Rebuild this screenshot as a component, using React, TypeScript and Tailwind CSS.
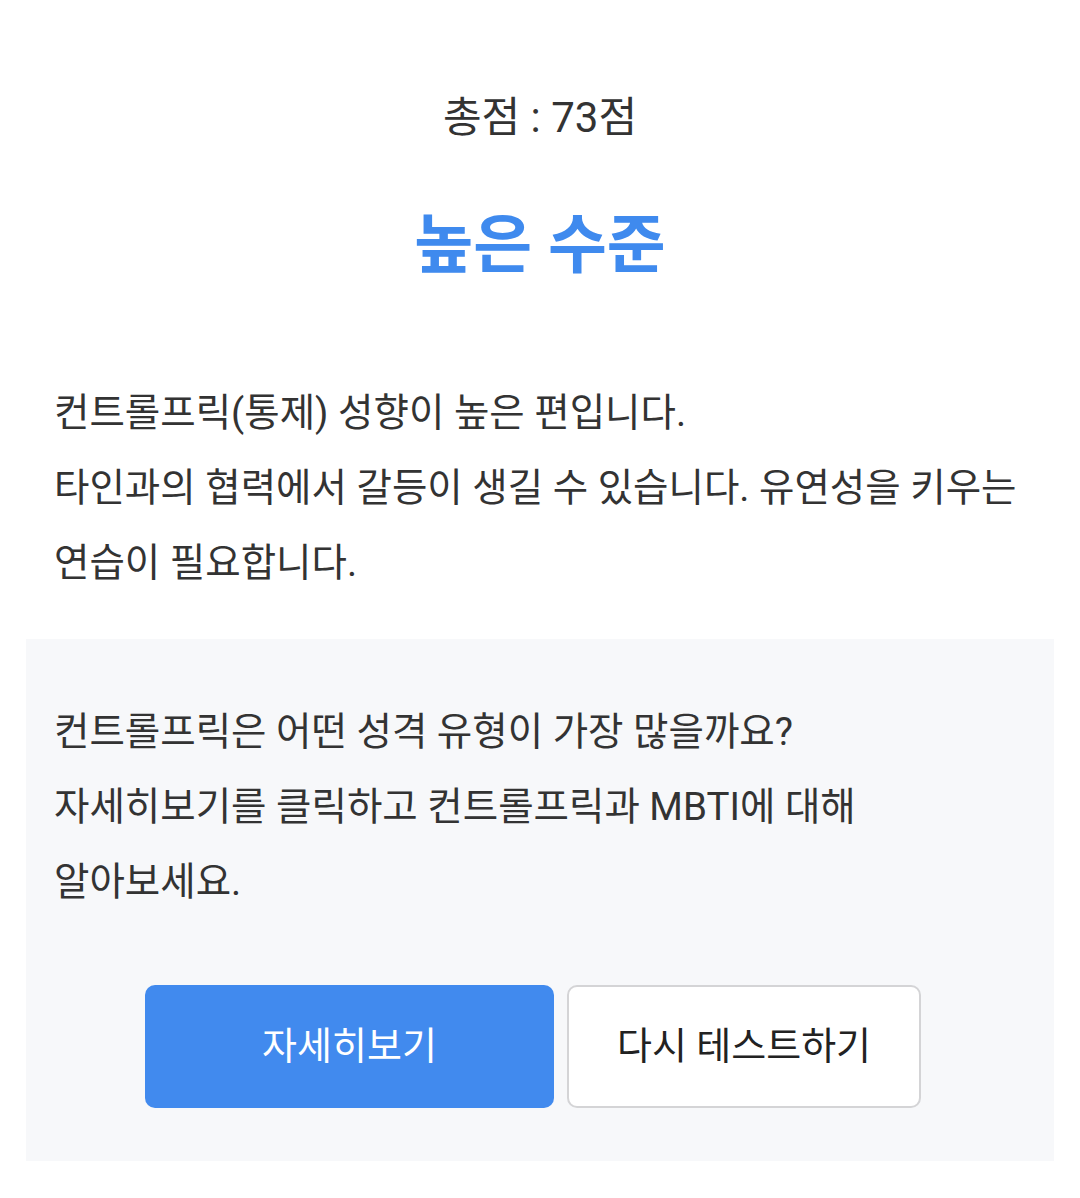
export default function App() {
  return (
    <div
      className="min-h-screen w-[1080px] bg-white text-[#333333]"
      style={{ fontFamily: 'Roboto, "Noto Sans CJK KR", sans-serif' }}
    >
      <div className="flex flex-col items-center pt-[91px]">
        <p className="text-[42px] leading-[54px]">총점 : 73점</p>
        <h1 className="mt-[56px] text-[64px] font-bold leading-[90px] text-[#3f8aee]">
          높은 수준
        </h1>
      </div>

      <div className="mt-[84px] break-keep px-[54px] text-[38.5px] leading-[75px]">
        <p>컨트롤프릭(통제) 성향이 높은 편입니다.</p>
        <p>타인과의 협력에서 갈등이 생길 수 있습니다. 유연성을 키우는 연습이 필요합니다.</p>
      </div>

      <section className="mx-[26px] mt-[39px] bg-[#f7f8fa] px-[28px] pt-[55px] pb-[53px]">
        <div className="break-keep text-[38.5px] leading-[75px]">
          <p>컨트롤프릭은 어떤 성격 유형이 가장 많을까요?</p>
          <p>자세히보기를 클릭하고 컨트롤프릭과 MBTI에 대해 알아보세요.</p>
        </div>
        <div className="mt-[66px] flex justify-center gap-[13px] pr-[14px]">
          <button className="flex h-[123px] w-[409px] items-center justify-center rounded-[10px] bg-[#418aee] text-[38px] text-white">
            자세히보기
          </button>
          <button className="flex h-[123px] w-[354px] items-center justify-center rounded-[10px] border-2 border-[#d4d4d6] bg-white text-[38px] text-[#222222]">
            다시 테스트하기
          </button>
        </div>
      </section>
    </div>
  );
}
